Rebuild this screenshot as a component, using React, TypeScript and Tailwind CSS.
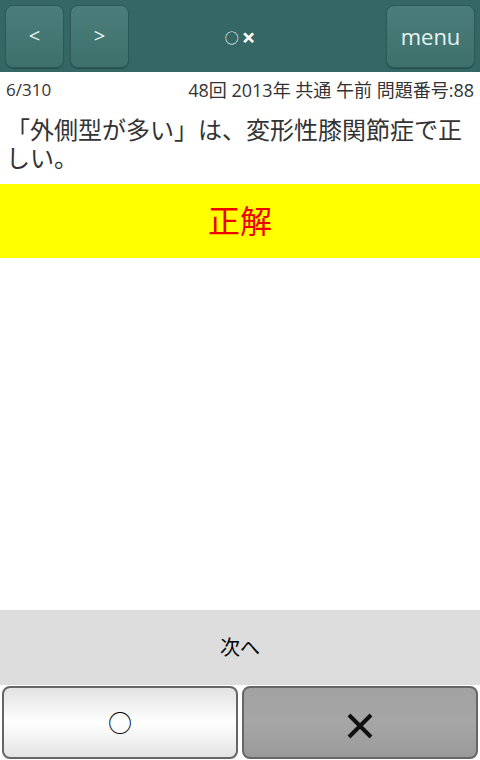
export default function App() {
  const font = { fontFamily: '"Open Sans", "Noto Sans CJK JP", sans-serif' };

  return (
    <div className="flex h-[760px] w-[480px] flex-col bg-white" style={font}>
      {/* top bar */}
      <div className="flex h-[72px] shrink-0 items-center bg-[#356865] px-[5px]">
        <div className="flex flex-1 gap-[6px]">
          <button className="h-[63px] w-[59px] rounded-lg border border-[#2d5a57] bg-gradient-to-b from-[#4b7e7a] to-[#3e706c] text-[20px] text-[#e8f4f2] shadow-[0_1px_1px_rgba(0,0,0,0.25)]">
            &lt;
          </button>
          <button className="h-[63px] w-[59px] rounded-lg border border-[#2d5a57] bg-gradient-to-b from-[#4b7e7a] to-[#3e706c] text-[20px] text-[#e8f4f2] shadow-[0_1px_1px_rgba(0,0,0,0.25)]">
            &gt;
          </button>
        </div>
        <div className="flex items-center gap-[3px] pt-[2px] text-white">
          <span className="text-[14px]">○</span>
          <span className="text-[24px] font-bold leading-none">×</span>
        </div>
        <div className="flex flex-1 justify-end">
          <button className="h-[63px] w-[89px] rounded-lg border border-[#2d5a57] bg-gradient-to-b from-[#4b7e7a] to-[#3e706c] text-[22px] text-[#e8f4f2] shadow-[0_1px_1px_rgba(0,0,0,0.25)]">
            menu
          </button>
        </div>
      </div>

      {/* info line */}
      <div className="flex h-[36px] items-center justify-between px-[6px] text-[17px] text-[#333]">
        <span>6/310</span>
        <span className="text-[18px]">48回 2013年 共通 午前 問題番号:88</span>
      </div>

      {/* question */}
      <p className="mt-[8px] px-[6px] text-[24px] leading-[28px] text-[#333]">
        「外側型が多い」は、変形性膝関節症で正しい。
      </p>

      {/* result */}
      <div className="mt-[12px] flex h-[74px] items-center justify-center bg-[#ffff00] text-[32px] text-[#ee0000]">
        正解
      </div>

      <div className="flex-1" />

      {/* next */}
      <div className="flex h-[75px] shrink-0 items-center justify-center bg-[#dddddd] text-[20px] text-black">
        次へ
      </div>

      {/* answer buttons */}
      <div className="flex h-[75px] shrink-0 gap-[4px] px-[2px] pb-[1px] pt-[1px]">
        <button className="flex flex-1 items-center justify-center rounded-lg border-2 border-[#666] bg-gradient-to-b from-[#e2e2e2] via-[#ffffff] to-[#e4e4e4] text-[24px] text-black">
          ○
        </button>
        <button className="flex flex-1 items-center justify-center rounded-lg border-2 border-[#666] bg-gradient-to-b from-[#a2a2a2] via-[#a6a6a6] to-[#9a9a9a]">
          <svg width="28" height="28" viewBox="0 0 28 28" className="mt-[6px]">
            <path d="M3 3 L25 25 M25 3 L3 25" stroke="#111" strokeWidth="4" />
          </svg>
        </button>
      </div>
    </div>
  );
}
